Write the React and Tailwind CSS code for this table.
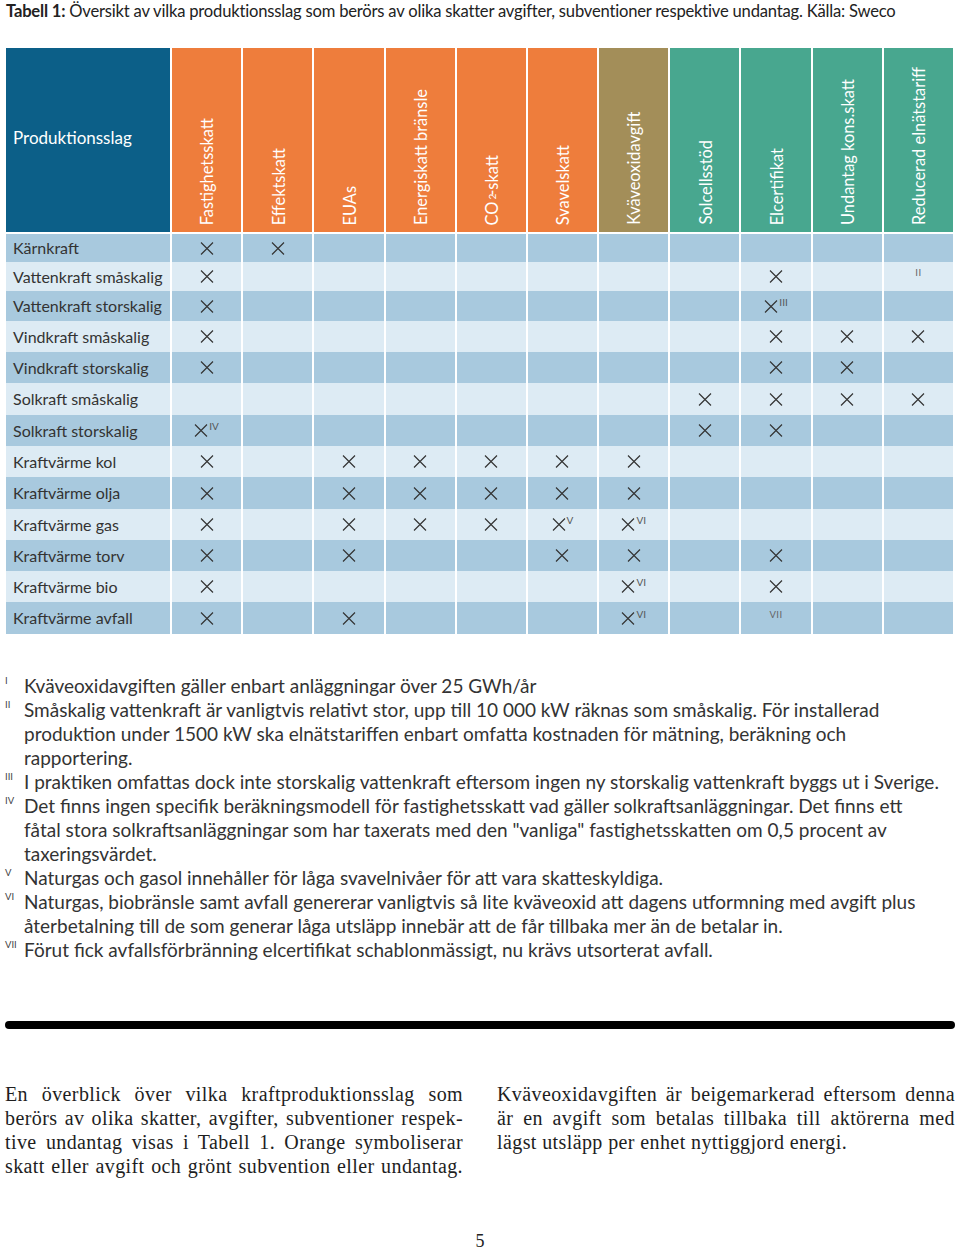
import React from "react";

const headers = [
  { label: "Fastighetsskatt", bg: "bg-[#ee7d3c]" },
  { label: "Effektskatt", bg: "bg-[#ee7d3c]" },
  { label: "EUAs", bg: "bg-[#ee7d3c]" },
  { label: "Energiskatt bränsle", bg: "bg-[#ee7d3c]" },
  { label: "co2", bg: "bg-[#ee7d3c]" },
  { label: "Svavelskatt", bg: "bg-[#ee7d3c]" },
  { label: "kvav", bg: "bg-[#a38e59]" },
  { label: "Solcellsstöd", bg: "bg-[#48a78f]" },
  { label: "Elcertifikat", bg: "bg-[#48a78f]" },
  { label: "Undantag kons.skatt", bg: "bg-[#48a78f]" },
  { label: "Reducerad elnätstariff", bg: "bg-[#48a78f]" },
];

// x = kryss, note = upphöjd not, only = bara not utan kryss
const rows = [
  { name: "Kärnkraft", h: "h-[28px]", cells: { 0: {}, 1: {} } },
  { name: "Vattenkraft småskalig", h: "h-[29px]", cells: { 0: {}, 8: {}, 10: { only: "II" } } },
  { name: "Vattenkraft storskalig", h: "h-[30px]", cells: { 0: {}, 8: { note: "III" } } },
  { name: "Vindkraft småskalig", h: "h-[31px]", cells: { 0: {}, 8: {}, 9: {}, 10: {} } },
  { name: "Vindkraft storskalig", h: "h-[31px]", cells: { 0: {}, 8: {}, 9: {} } },
  { name: "Solkraft småskalig", h: "h-[32px]", cells: { 7: {}, 8: {}, 9: {}, 10: {} } },
  { name: "Solkraft storskalig", h: "h-[31px]", cells: { 0: { note: "IV" }, 7: {}, 8: {} } },
  { name: "Kraftvärme kol", h: "h-[31px]", cells: { 0: {}, 2: {}, 3: {}, 4: {}, 5: {}, 6: {} } },
  { name: "Kraftvärme olja", h: "h-[32px]", cells: { 0: {}, 2: {}, 3: {}, 4: {}, 5: {}, 6: {} } },
  { name: "Kraftvärme gas", h: "h-[31px]", cells: { 0: {}, 2: {}, 3: {}, 4: {}, 5: { note: "V" }, 6: { note: "VI" } } },
  { name: "Kraftvärme torv", h: "h-[31px]", cells: { 0: {}, 2: {}, 5: {}, 6: {}, 8: {} } },
  { name: "Kraftvärme bio", h: "h-[31px]", cells: { 0: {}, 6: { note: "VI" }, 8: {} } },
  { name: "Kraftvärme avfall", h: "h-[32px]", cells: { 0: {}, 2: {}, 6: { note: "VI" }, 8: { only: "VII" } } },
];

const notes = [
  { n: "I", lines: ["Kväveoxidavgiften gäller enbart anläggningar över 25 GWh/år"] },
  {
    n: "II",
    lines: [
      "Småskalig vattenkraft är vanligtvis relativt stor, upp till 10 000 kW räknas som småskalig. För installerad",
      "produktion under 1500 kW ska elnätstariffen enbart omfatta kostnaden för mätning, beräkning och",
      "rapportering.",
    ],
  },
  { n: "III", lines: ["I praktiken omfattas dock inte storskalig vattenkraft eftersom ingen ny storskalig vattenkraft byggs ut i Sverige."] },
  {
    n: "IV",
    lines: [
      "Det finns ingen specifik beräkningsmodell för fastighetsskatt vad gäller solkraftsanläggningar. Det finns ett",
      "fåtal stora solkraftsanläggningar som har taxerats med den \"vanliga\" fastighetsskatten om 0,5 procent av",
      "taxeringsvärdet.",
    ],
  },
  { n: "V", lines: ["Naturgas och gasol innehåller för låga svavelnivåer för att vara skatteskyldiga."] },
  {
    n: "VI",
    lines: [
      "Naturgas, biobränsle samt avfall genererar vanligtvis så lite kväveoxid att dagens utformning med avgift plus",
      "återbetalning till de som generar låga utsläpp innebär att de får tillbaka mer än de betalar in.",
    ],
  },
  { n: "VII", lines: ["Förut fick avfallsförbränning elcertifikat schablonmässigt, nu krävs utsorterat avfall."] },
];

function Cross() {
  return (
    <svg width="14" height="13" viewBox="0 0 14 13" className="shrink-0">
      <path d="M1 0.5L13 12.5M13 0.5L1 12.5" stroke="#333" strokeWidth="1.15" fill="none" />
    </svg>
  );
}

function HeaderLabel({ label }) {
  if (label === "co2") {
    return (
      <span>
        CO<sub className="text-[10px]">2</sub>-skatt
      </span>
    );
  }
  if (label === "kvav") {
    return (
      <span>
        Kväveoxidavgift<sup className="text-[9px]">I</sup>
      </span>
    );
  }
  return <span>{label}</span>;
}

function Cell({ cell }) {
  if (!cell) return null;
  if (cell.only) {
    return <span className="text-[9.5px] text-[#666] -mt-[6px] tracking-[0.5px]">{cell.only}</span>;
  }
  return (
    <span className="inline-flex items-start">
      <Cross />
      {cell.note && <span className="text-[10px] leading-none text-[#555] -mt-[3px] ml-[1px]">{cell.note}</span>}
    </span>
  );
}

export default function App() {
  return (
    <div className="w-[960px] h-[1251px] bg-white text-[#333] font-['Lato',sans-serif] flex flex-col">
      <h1 className="pl-[6px] text-[16.6px] leading-[22px] text-[#222] tracking-[-0.2px]">
        <span className="font-bold">Tabell 1:</span> Översikt av vilka produktionsslag som berörs av olika skatter avgifter, subventioner respektive undantag. Källa: Sweco
      </h1>

      <div className="mt-[26px] ml-[6px] w-[947px]">
        <div className="grid grid-cols-[164px_repeat(11,minmax(0,1fr))] gap-x-[2px] h-[184px]">
          <div className="bg-[#0c5f88] flex items-center pl-[7px] pb-[4px] text-white text-[17px]">Produktionsslag</div>
          {headers.map((h) => (
            <div key={h.label} className={`${h.bg} flex flex-col items-center justify-end pb-[7px] pl-[2px]`}>
              <div className="[writing-mode:vertical-rl] rotate-180 whitespace-nowrap text-white text-[16.4px] leading-none">
                <HeaderLabel label={h.label} />
              </div>
            </div>
          ))}
        </div>

        <div className="mt-[2px]">
          {rows.map((r, i) => {
            const bg = i % 2 === 0 ? "bg-[#a8c9de]" : "bg-[#ddebf4]";
            return (
              <div key={r.name} className={`grid grid-cols-[164px_repeat(11,minmax(0,1fr))] gap-x-[2px] ${r.h}`}>
                <div className={`${bg} flex items-center pl-[7px] text-[16px] text-[#333] whitespace-nowrap`}>{r.name}</div>
                {headers.map((h, c) => (
                  <div key={c} className={`${bg} flex items-center justify-center`}>
                    <Cell cell={r.cells[c]} />
                  </div>
                ))}
              </div>
            );
          })}
        </div>
      </div>

      <div className="mt-[40px] flex flex-col text-[19px] leading-[24px] text-[#333]">
        {notes.map((note) => (
          <div key={note.n} className="flex">
            <span className="w-[24px] shrink-0 pl-[5px] text-[9.5px] leading-[14px] text-[#444]">{note.n}</span>
            <div className="flex flex-col whitespace-nowrap">
              {note.lines.map((l) => (
                <span key={l}>{l}</span>
              ))}
            </div>
          </div>
        ))}
      </div>

      <div className="mt-[59px] mx-[5px] h-[8px] rounded-full bg-black" />

      <div className="mt-[53px] px-[5px] flex gap-[34px] font-['Liberation_Serif',serif] text-[20px] leading-[24px] tracking-[0.4px] text-[#1e1e1e]">
        <div className="w-[458px] flex flex-col">
          <span className="text-justify [text-align-last:justify]">En överblick över vilka kraftproduktionsslag som</span>
          <span className="text-justify [text-align-last:justify]">berörs av olika skatter, avgifter, subventioner respek-</span>
          <span className="text-justify [text-align-last:justify]">tive undantag visas i Tabell 1. Orange symboliserar</span>
          <span className="text-justify [text-align-last:justify]">skatt eller avgift och grönt subvention eller undantag.</span>
        </div>
        <div className="w-[458px] flex flex-col">
          <span className="text-justify [text-align-last:justify]">Kväveoxidavgiften är beigemarkerad eftersom denna</span>
          <span className="text-justify [text-align-last:justify]">är en avgift som betalas tillbaka till aktörerna med</span>
          <span>lägst utsläpp per enhet nyttiggjord energi.</span>
        </div>
      </div>

      <div className="mt-auto h-[20px] text-center font-['Liberation_Serif',serif] text-[18px] leading-[20px] text-[#222]">5</div>
    </div>
  );
}
